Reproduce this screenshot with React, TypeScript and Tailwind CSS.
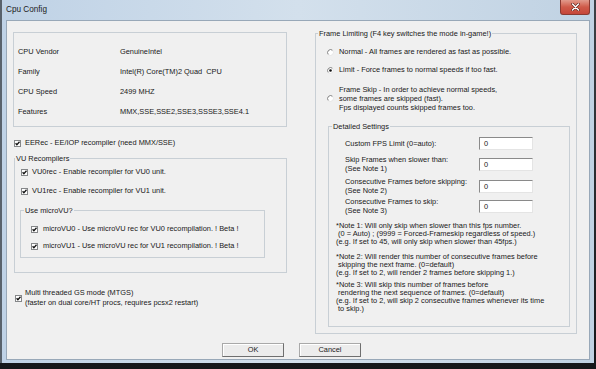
import React from 'react';

const CheckBox: React.FC<{ checked?: boolean }> = ({ checked = true }) => (
  <svg width="7" height="7" viewBox="0 0 7 7" className="shrink-0">
    <rect x="0.5" y="0.5" width="6" height="6" fill="#fff" stroke="#858789" />
    {checked && <path d="M1.6 3.2 L2.9 4.7 L5.5 1.8" fill="none" stroke="#111" strokeWidth="1.3" />}
  </svg>
);

const Radio: React.FC<{ checked?: boolean }> = ({ checked = false }) => (
  <svg width="7" height="7" viewBox="0 0 7 7" className="shrink-0">
    <circle cx="3.5" cy="3.5" r="3" fill="#fff" />
    <path d="M1.38 5.62 A3 3 0 0 1 5.62 1.38" fill="none" stroke="#6f6f6f" strokeWidth="0.9" />
    <path d="M5.62 1.38 A3 3 0 0 1 1.38 5.62" fill="none" stroke="#e2e2e2" strokeWidth="0.9" />
    {checked && <circle cx="3.5" cy="3.5" r="1.3" fill="#111" />}
  </svg>
);

const Group: React.FC<{ title: string; className?: string; legendClass?: string; children: React.ReactNode }> = ({
  title,
  className = '',
  legendClass = 'ml-[2px]',
  children,
}) => (
  <fieldset className={`border border-[#c8cfd5] ${className}`}>
    <legend className={`px-[1px] leading-[9px] ${legendClass}`}>{title}</legend>
    {children}
  </fieldset>
);

const NumField: React.FC = () => (
  <div className="w-[54px] h-[13px] shrink-0 bg-white border-t border-l border-[#8a8a8a] border-b border-r border-b-[#e4e4e4] border-r-[#e4e4e4] pl-[4px] leading-[12px]">
    0
  </div>
);

const cpuInfo = [
  ['CPU Vendor', 'GenuineIntel'],
  ['Family', 'Intel(R) Core(TM)2 Quad  CPU'],
  ['CPU Speed', '2499 MHZ'],
  ['Features', 'MMX,SSE,SSE2,SSE3,SSSE3,SSE4.1'],
];

const fields = [
  { lines: ['Custom FPS Limit (0=auto):'], mt: 'mt-[6px]' },
  { lines: ['Skip Frames when slower than:', '(See Note 1)'], mt: 'mt-[5px]' },
  { lines: ['Consecutive Frames before skipping:', '(See Note 2)'], mt: 'mt-[4px]' },
  { lines: ['Consecutive Frames to skip:', '(See Note 3)'], mt: 'mt-[2px]' },
];

const notes = [
  {
    mt: 'mt-[7px]',
    lines: [
      '*Note 1: Will only skip when slower than this fps number.',
      ' (0 = Auto) ; (9999 = Forced-Frameskip regardless of speed.)',
      '(e.g. If set to 45, will only skip when slower than 45fps.)',
    ],
  },
  {
    mt: 'mt-[7px]',
    lines: [
      '*Note 2: Will render this number of consecutive frames before',
      ' skipping the next frame. (0=default)',
      '(e.g. If set to 2, will render 2 frames before skipping 1.)',
    ],
  },
  {
    mt: 'mt-[4px]',
    lines: [
      '*Note 3: Will skip this number of frames before',
      ' rendering the next sequence of frames. (0=default)',
      '(e.g. If set to 2, will skip 2 consecutive frames whenever its time',
      ' to skip.)',
    ],
  },
];

const Button: React.FC<{ label: string; className?: string }> = ({ label, className = '' }) => (
  <button className={`h-[14px] w-[62px] bg-[#ececec] border border-[#a9a9a9] border-r-[#6f6f6f] border-b-[#6f6f6f] shadow-[inset_1px_1px_0_#fff] leading-[12px] text-[#1a1a1a] ${className}`}>
    {label}
  </button>
);

export default function App() {
  return (
    <div className="w-[596px] h-[369px] overflow-hidden flex flex-col bg-gradient-to-b from-[#3d4146] to-[#15171a] font-['Liberation_Sans',Arial,sans-serif] text-[7.4px] text-[#181818]">
      <div className="h-[363px] mr-[2px] flex flex-col border-l-2 border-[#59626c] bg-gradient-to-r from-[#bfd2e6] via-[#d3e0ec] to-[#c0d2e3]">
        {/* title bar */}
        <div className="h-[20px] flex items-start">
          <span className="ml-[4px] mt-[5px] text-[8.2px] leading-[10px] text-[#1c1c1c]">Cpu Config</span>
          <div className="ml-auto mr-[4px] w-[30px] h-[15px] rounded-b-[3px] border border-t-0 border-[#8a3a32] bg-gradient-to-b from-[#e19a8c] via-[#cf5a49] to-[#c5463a] flex items-center justify-center">
            <svg width="9" height="8" viewBox="0 0 9 8">
              <path d="M1.5 1 L7.5 7 M7.5 1 L1.5 7" stroke="#5a1e18" strokeWidth="2.6" strokeLinecap="round" />
              <path d="M1.5 1 L7.5 7 M7.5 1 L1.5 7" stroke="#fff" strokeWidth="1.5" strokeLinecap="round" />
            </svg>
          </div>
        </div>

        {/* client area */}
        <div className="ml-[4px] mr-[4px] h-[340px] bg-[#f0f0f0] border border-[#98a8b8] overflow-hidden flex flex-col">
          <div className="flex">
            {/* left column */}
            <div className="ml-[6px] pt-[11px] w-[274px] flex flex-col">
              <div className="border border-[#c8cfd5] pt-[9px] pb-[4px] pl-[4px]">
                {cpuInfo.map(([k, v]) => (
                  <div key={k} className="h-[20px] flex items-center">
                    <span className="w-[102px]">{k}</span>
                    <span className="whitespace-pre">{v}</span>
                  </div>
                ))}
              </div>

              <div className="mt-[11px] ml-[1px] h-[10px] flex items-center gap-[4px]">
                <CheckBox />
                <span>EERec - EE/IOP recompiler (need MMX/SSE)</span>
              </div>

              <Group title="VU Recompilers" className="mt-[6px] ml-[1px] w-[273px] pb-[14px]" legendClass="ml-0">
                <div className="mt-[4px] pl-[6px] h-[10px] flex items-center gap-[4px]">
                  <CheckBox />
                  <span>VU0rec - Enable recompiler for VU0 unit.</span>
                </div>
                <div className="mt-[9px] pl-[6px] h-[10px] flex items-center gap-[4px]">
                  <CheckBox />
                  <span>VU1rec - Enable recompiler for VU1 unit.</span>
                </div>
                <Group title="Use microVU?" className="mt-[10px] ml-[5px] w-[245px] pb-[6px]" legendClass="ml-[3px]">
                  <div className="mt-[9px] pl-[10px] h-[10px] flex items-center gap-[5px]">
                    <CheckBox />
                    <span>microVU0 - Use microVU rec for VU0 recompilation. ! Beta !</span>
                  </div>
                  <div className="mt-[7px] pl-[10px] h-[10px] flex items-center gap-[5px]">
                    <CheckBox />
                    <span>microVU1 - Use microVU rec for VU1 recompilation. ! Beta !</span>
                  </div>
                </Group>
              </Group>

              <div className="mt-[15px] ml-[2px] flex items-center gap-[3px]">
                <CheckBox />
                <div className="leading-[10px]">
                  <div>Multi threaded GS mode (MTGS)</div>
                  <div>(faster on dual core/HT procs, requires pcsx2 restart)</div>
                </div>
              </div>
            </div>

            {/* right column */}
            <div className="ml-[28px] pt-[8px]">
              <Group title="Frame Limiting (F4 key switches the mode in-game!)" className="w-[262px] pb-[6px]">
                <div className="mt-[9px] pl-[11px] h-[10px] flex items-center gap-[5px]">
                  <Radio />
                  <span>Normal - All frames are rendered as fast as possible.</span>
                </div>
                <div className="mt-[8px] pl-[11px] h-[10px] flex items-center gap-[5px]">
                  <Radio checked />
                  <span>Limit - Force frames to normal speeds if too fast.</span>
                </div>
                <div className="mt-[10px] pl-[11px] flex items-center gap-[5px] leading-[9px]">
                  <Radio />
                  <div>
                    <div>Frame Skip - In order to achieve normal speeds,</div>
                    <div>some frames are skipped (fast).</div>
                    <div>Fps displayed counts skipped frames too.</div>
                  </div>
                </div>

                <Group title="Detailed Settings" className="mt-[10px] ml-[12px] w-[242px] pb-[13px]" legendClass="ml-[3px]">
                  {fields.map((f) => (
                    <div key={f.lines[0]} className={`${f.mt} pl-[16px] flex items-center ${f.lines.length > 1 ? 'h-[18px]' : 'h-[13px]'}`}>
                      <div className="w-[134px] leading-[9px]">
                        {f.lines.map((l) => (
                          <div key={l}>{l}</div>
                        ))}
                      </div>
                      <NumField />
                    </div>
                  ))}
                  {notes.map((n, i) => (
                    <div key={i} className={`${n.mt} pl-[7px] leading-[8px]`}>
                      {n.lines.map((l) => (
                        <div key={l} className="whitespace-pre">
                          {l}
                        </div>
                      ))}
                    </div>
                  ))}
                </Group>
              </Group>
            </div>
          </div>

          {/* buttons */}
          <div className="mt-[9px] ml-[215px] flex gap-[15px]">
            <Button label="OK" />
            <Button label="Cancel" />
          </div>
        </div>
      </div>
    </div>
  );
}
